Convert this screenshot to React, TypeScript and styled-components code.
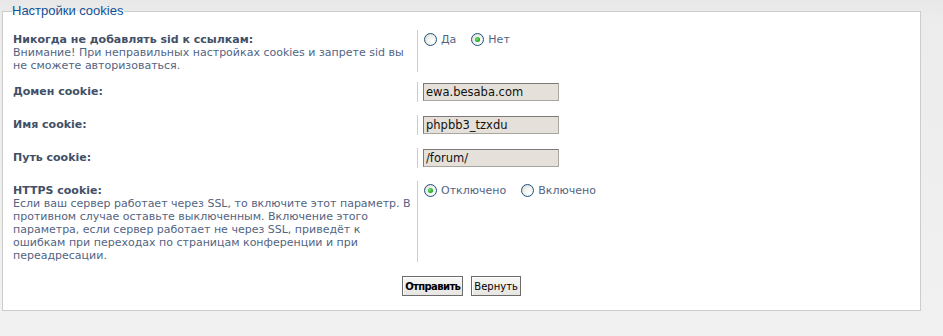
import React from 'react'
import styled, { createGlobalStyle } from 'styled-components'

const GlobalStyle = createGlobalStyle`
  html, body {
    margin: 0;
    padding: 0;
    height: 100%;
  }
  body {
    background: linear-gradient(#e8e8e8 0, #ececec 20px, #f1f1f1 320px);
    font-family: "DejaVu Sans", Verdana, sans-serif;
  }
`

const Page = styled.div`
  padding: 3px 22px 0 2px;
`

const Fieldset = styled.fieldset`
  margin: 0;
  padding: 11px 0 14px;
  border: 1px solid #cccccc;
  background: #ffffff;
  min-width: 0;
`

const Legend = styled.legend`
  margin-left: 9px;
  padding: 0 1px 0 0;
  font-family: "Liberation Sans", Arial, sans-serif;
  font-size: 13px;
  line-height: 16px;
  color: #115098;
`

const Rows = styled.div`
  display: flex;
  flex-direction: column;
`

const Row = styled.div<{ $gap?: number }>`
  display: flex;
  margin-bottom: ${p => p.$gap ?? 13}px;
`

const Label = styled.div`
  box-sizing: border-box;
  width: 415px;
  flex: none;
  padding: 3px 2px 0 10px;
  border-right: 1px solid #cccccc;
`

const Title = styled.div`
  font-size: 11px;
  line-height: 13px;
  font-weight: bold;
  color: #425067;
`

const Explain = styled.div`
  font-size: 11px;
  line-height: 13px;
  color: #536482;
`

const Field = styled.div`
  flex: 1;
  padding: 1px 0 1px 5px;
`

const TextInput = styled.input`
  box-sizing: border-box;
  display: block;
  width: 136px;
  height: 18px;
  margin: 0;
  padding: 0 2px;
  border: 1px solid #a9a6a0;
  border-top-color: #7c7a76;
  border-left-color: #7c7a76;
  background: #e5e1da;
  font-family: "DejaVu Sans", Verdana, sans-serif;
  font-size: 11.5px;
  color: #111111;
  outline: none;
`

const RadioGroup = styled.div`
  display: flex;
  align-items: center;
  gap: 15px;
  margin: 2px 0 0 1px;
`

const RadioLabel = styled.label`
  display: flex;
  align-items: center;
  gap: 4px;
  font-size: 11px;
  line-height: 13px;
  color: #536482;
`

const RadioDot = styled.span<{ $checked?: boolean }>`
  position: relative;
  box-sizing: border-box;
  width: 13px;
  height: 13px;
  border-radius: 50%;
  border: 1px solid #1d5281;
  background: radial-gradient(circle at 65% 65%, #ffffff 0, #f3f3ef 40%, #d6d5cf 100%);

  &::after {
    content: '';
    display: ${p => (p.$checked ? 'block' : 'none')};
    position: absolute;
    left: 3px;
    top: 3px;
    width: 5px;
    height: 5px;
    border-radius: 50%;
    background: radial-gradient(circle at 40% 40%, #7ee37e 0, #22a822 60%, #178a17 100%);
  }
`

const Buttons = styled.div`
  display: flex;
  justify-content: center;
  gap: 8px;
  padding-top: 14px;
`

const Button = styled.button<{ $primary?: boolean }>`
  box-sizing: border-box;
  height: 20px;
  margin: 0;
  padding: 0 2px;
  border: 1px solid #6b6b6b;
  background: linear-gradient(#f7f7f5, #e6e5e1);
  box-shadow: inset 1px 1px 0 #ffffff;
  font-family: "DejaVu Sans", Verdana, sans-serif;
  font-size: 10px;
  font-weight: ${p => (p.$primary ? 'bold' : 'normal')};
  letter-spacing: ${p => (p.$primary ? '-0.6px' : '0')};
  color: #000000;
  cursor: pointer;
`

interface RadioOption {
  label: string
  checked?: boolean
}

const Radios: React.FC<{ options: RadioOption[] }> = ({ options }) => (
  <RadioGroup>
    {options.map(o => (
      <RadioLabel key={o.label}>
        <RadioDot $checked={o.checked} />
        {o.label}
      </RadioLabel>
    ))}
  </RadioGroup>
)

const textFields = [
  { title: 'Домен cookie:', value: 'ewa.besaba.com' },
  { title: 'Имя cookie:', value: 'phpbb3_tzxdu' },
  { title: 'Путь cookie:', value: '/forum/' },
]

export default function App() {
  return (
    <>
      <GlobalStyle />
      <Page>
        <Fieldset>
          <Legend>Настройки cookies</Legend>

          <Rows>
            <Row $gap={10}>
              <Label>
                <Title>Никогда не добавлять sid к ссылкам:</Title>
                <Explain>
                  Внимание! При неправильных настройках cookies и запрете sid вы не сможете
                  авторизоваться.
                </Explain>
              </Label>
              <Field>
                <Radios options={[{ label: 'Да' }, { label: 'Нет', checked: true }]} />
              </Field>
            </Row>

            {textFields.map(f => (
              <Row key={f.title}>
                <Label>
                  <Title>{f.title}</Title>
                </Label>
                <Field>
                  <TextInput type="text" defaultValue={f.value} />
                </Field>
              </Row>
            ))}

            <Row $gap={0}>
              <Label>
                <Title>HTTPS cookie:</Title>
                <Explain>
                  Если ваш сервер работает через SSL, то включите этот параметр. В противном
                  случае оставьте выключенным. Включение этого параметра, если сервер работает
                  не через SSL, приведёт к ошибкам при переходах по страницам конференции и при
                  переадресации.
                </Explain>
              </Label>
              <Field>
                <Radios options={[{ label: 'Отключено', checked: true }, { label: 'Включено' }]} />
              </Field>
            </Row>
          </Rows>

          <Buttons>
            <Button type="button" $primary>
              Отправить
            </Button>
            <Button type="button">Вернуть</Button>
          </Buttons>
        </Fieldset>
      </Page>
    </>
  )
}
